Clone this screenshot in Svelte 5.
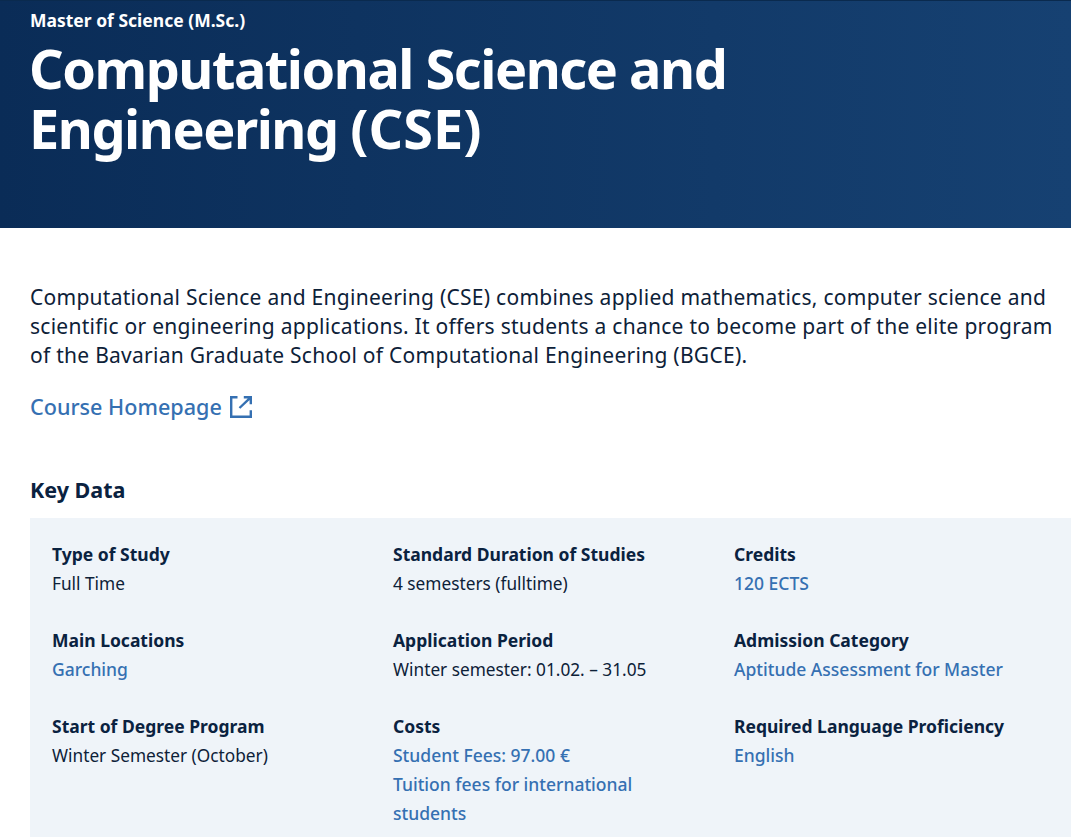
<script>
  const rows = [
    [
      { label: 'Type of Study', values: [{ text: 'Full Time' }] },
      { label: 'Standard Duration of Studies', values: [{ text: '4 semesters (fulltime)' }] },
      { label: 'Credits', values: [{ text: '120 ECTS', link: true }] }
    ],
    [
      { label: 'Main Locations', values: [{ text: 'Garching', link: true }] },
      { label: 'Application Period', values: [{ text: 'Winter semester: 01.02. – 31.05' }] },
      { label: 'Admission Category', values: [{ text: 'Aptitude Assessment for Master', link: true }] }
    ],
    [
      { label: 'Start of Degree Program', values: [{ text: 'Winter Semester (October)' }] },
      { label: 'Costs', values: [{ text: 'Student Fees: 97.00 €', link: true }, { text: 'Tuition fees for international students', link: true }] },
      { label: 'Required Language Proficiency', values: [{ text: 'English', link: true }] }
    ]
  ];
</script>

<header class="hero">
  <p class="eyebrow">Master of Science (M.Sc.)</p>
  <h1>Computational Science and<br />Engineering <span class="abbr">(CSE)</span></h1>
</header>

<main class="content">
  <p class="intro">Computational Science and Engineering (CSE) combines applied mathematics, computer science and scientific or engineering applications. It offers students a chance to become part of the elite program of the Bavarian Graduate School of Computational Engineering (BGCE).</p>
  <a class="home" href="#home">
    <span>Course Homepage</span>
    <svg width="22" height="22" viewBox="0 0 22 22" fill="none" stroke="currentColor" stroke-width="2.4" aria-hidden="true">
      <path d="M7.5 1.2H1.2v19.6h19.6v-6.6" />
      <path d="M13.8 1.2H20.8V8.2M20.4 1.6 9.5 12" />
    </svg>
  </a>
  <h2>Key Data</h2>
  <section class="panel">
    {#each rows as row}
      {#each row as item}
        <div class="item">
          <div class="label">{item.label}</div>
          {#each item.values as v}
            {#if v.link}
              <a class="value link" href="#v">{v.text}</a>
            {:else}
              <div class="value">{v.text}</div>
            {/if}
          {/each}
        </div>
      {/each}
    {/each}
  </section>
</main>

<style>
  :global(body) {
    margin: 0;
    overflow: hidden;
    background: #fff;
    font-family: "Noto Sans", sans-serif;
    color: #0a2240;
  }
  .hero {
    box-sizing: border-box;
    height: 228px;
    padding: 9px 30px 0;
    background: linear-gradient(90deg, #0a2c57 0%, #164172 100%);
    border-top: 1px solid #0a2a4e;
    color: #fff;
  }
  .eyebrow {
    margin: 0;
    font-size: 17.5px;
    line-height: 20px;
    font-weight: 700;
  }
  h1 {
    margin: 8px 0 0 -1px;
    font-size: 54px;
    line-height: 60px;
    font-weight: 700;
    letter-spacing: -1.46px;
  }
  .abbr {
    letter-spacing: 0;
  }
  .content {
    padding: 55px 0 0 30px;
  }
  .intro {
    margin: 0;
    font-size: 21px;
    line-height: 29px;
    letter-spacing: 0.27px;
    max-width: 1035px;
    color: #0d2138;
  }
  .home {
    display: inline-flex;
    align-items: center;
    gap: 8px;
    margin-top: 22px;
    font-size: 21.6px;
    line-height: 29px;
    font-weight: 500;
    color: #3570b2;
    text-decoration: none;
  }
  h2 {
    margin: 54px 0 0;
    font-size: 21.5px;
    line-height: 29px;
    font-weight: 700;
    color: #0a2240;
  }
  .panel {
    display: grid;
    grid-template-columns: repeat(3, 341px);
    row-gap: 28px;
    margin-top: 14px;
    padding: 22px 0 12px 22px;
    background: #eff4f9;
  }
  .item {
    font-size: 17.25px;
    line-height: 29px;
    padding-right: 60px;
  }
  .label {
    font-weight: 700;
    font-size: 17.5px;
    color: #0a2240;
  }
  .value {
    display: block;
    color: #0d2138;
  }
  .link {
    color: #3570b2;
    font-size: 17.5px;
    font-weight: 500;
    text-decoration: none;
  }
</style>
